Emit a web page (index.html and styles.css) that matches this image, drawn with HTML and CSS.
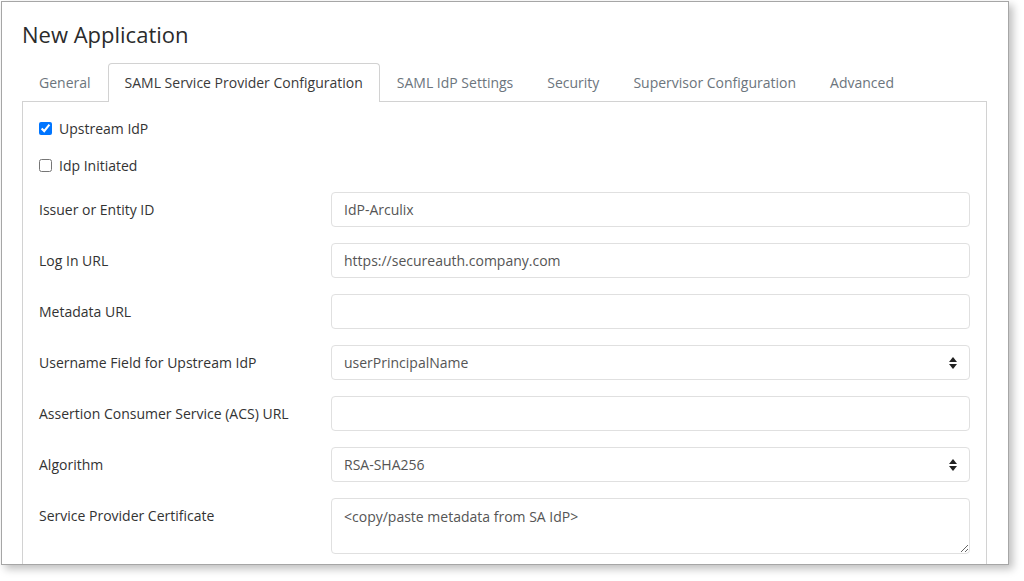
FILE: index.html
```html
<!DOCTYPE html>
<html lang="en">
<head>
    <meta charset="UTF-8">
    <title>New Application</title>
    <link rel="stylesheet" href="styles.css">
</head>
<body>
    <div class="window">
        <h1 class="title">New Application</h1>

        <ul class="tabs">
            <li class="tab">General</li>
            <li class="tab active">SAML Service Provider Configuration</li>
            <li class="tab">SAML IdP Settings</li>
            <li class="tab">Security</li>
            <li class="tab">Supervisor Configuration</li>
            <li class="tab">Advanced</li>
        </ul>

        <div class="panel">
            <div class="checks">
                <label class="check"><input type="checkbox" checked> Upstream IdP</label>
                <label class="check"><input type="checkbox"> Idp Initiated</label>
            </div>

            <div class="form">
                <label class="label">Issuer or Entity ID</label>
                <input class="field" type="text" value="IdP-Arculix">

                <label class="label">Log In URL</label>
                <input class="field" type="text" value="https://secureauth.company.com">

                <label class="label">Metadata URL</label>
                <input class="field" type="text">

                <label class="label">Username Field for Upstream IdP</label>
                <div class="field select">userPrincipalName <span class="arrows"></span></div>

                <label class="label">Assertion Consumer Service (ACS) URL</label>
                <input class="field" type="text">

                <label class="label">Algorithm</label>
                <div class="field select">RSA-SHA256 <span class="arrows"></span></div>

                <label class="label top">Service Provider Certificate</label>
                <textarea class="field area">&lt;copy/paste metadata from SA IdP&gt;</textarea>
            </div>
        </div>
    </div>
</body>
</html>
```

FILE: styles.css
```css
body {
    margin: 0;
    min-height: 581px;
    background: #fff;
    font-family: "Open Sans", "Liberation Sans", sans-serif;
    color: #333;
    overflow: hidden;
}

/* screenshot frame */
.window {
    box-sizing: border-box;
    margin: 1px 0 0 1px;
    width: 1008px;
    height: 564px;
    border: 1px solid #a6a6a6;
    box-shadow: 4px 4px 8px rgba(0, 0, 0, 0.25);
    padding: 0 20px;
    overflow: hidden;
    background: #fff;
}

.title {
    margin: 17px 0 0 0;
    font-size: 22px;
    font-weight: 400;
    line-height: 30px;
    color: #2b2b2b;
}

.tabs {
    display: flex;
    margin: 14px 0 0;
    padding: 0;
    list-style: none;
    border-bottom: 1px solid #d2d2d2;
    width: 965px;
}

.tab {
    padding: 0 16px;
    height: 37px;
    line-height: 37px;
    font-size: 14px;
    color: #6c757d;
    border: 1px solid transparent;
    border-bottom: none;
    border-radius: 4px 4px 0 0;
    margin-bottom: -1px;
}

.tab.active {
    color: #3a3a3a;
    background: #fff;
    border-color: #d2d2d2;
    height: 38px;
}

.panel {
    width: 965px;
    box-sizing: border-box;
    border: 1px solid #d2d2d2;
    border-top: none;
    padding: 18px 16px 40px;
    height: 480px;
}

.checks {
    display: flex;
    flex-direction: column;
    gap: 20px;
    margin-bottom: 18px;
}

.check {
    display: flex;
    align-items: center;
    gap: 7px;
    font-size: 14px;
    height: 17px;
    color: #333;
}

.check input {
    margin: 0;
    width: 13px;
    height: 13px;
}

.form {
    display: grid;
    grid-template-columns: 292px 1fr;
    row-gap: 16px;
    align-items: center;
}

.label {
    font-size: 14px;
    color: #333;
}

.label.top {
    align-self: start;
    padding-top: 8px;
}

.field {
    box-sizing: border-box;
    height: 35px;
    border: 1px solid #e0e0e0;
    border-radius: 4px;
    padding: 0 12px;
    font-family: inherit;
    font-size: 14px;
    color: #555;
    background: #fff;
    width: 100%;
}

.select {
    display: flex;
    align-items: center;
    justify-content: space-between;
}

.arrows {
    position: relative;
    width: 8px;
    height: 12px;
}

.arrows::before,
.arrows::after {
    content: '';
    position: absolute;
    left: 0;
    border-left: 4px solid transparent;
    border-right: 4px solid transparent;
}

.arrows::before {
    top: 0;
    border-bottom: 5px solid #222;
}

.arrows::after {
    bottom: 0;
    border-top: 5px solid #222;
}

.area {
    height: 56px;
    padding: 8px 12px;
    align-self: start;
    resize: vertical;
}
```
